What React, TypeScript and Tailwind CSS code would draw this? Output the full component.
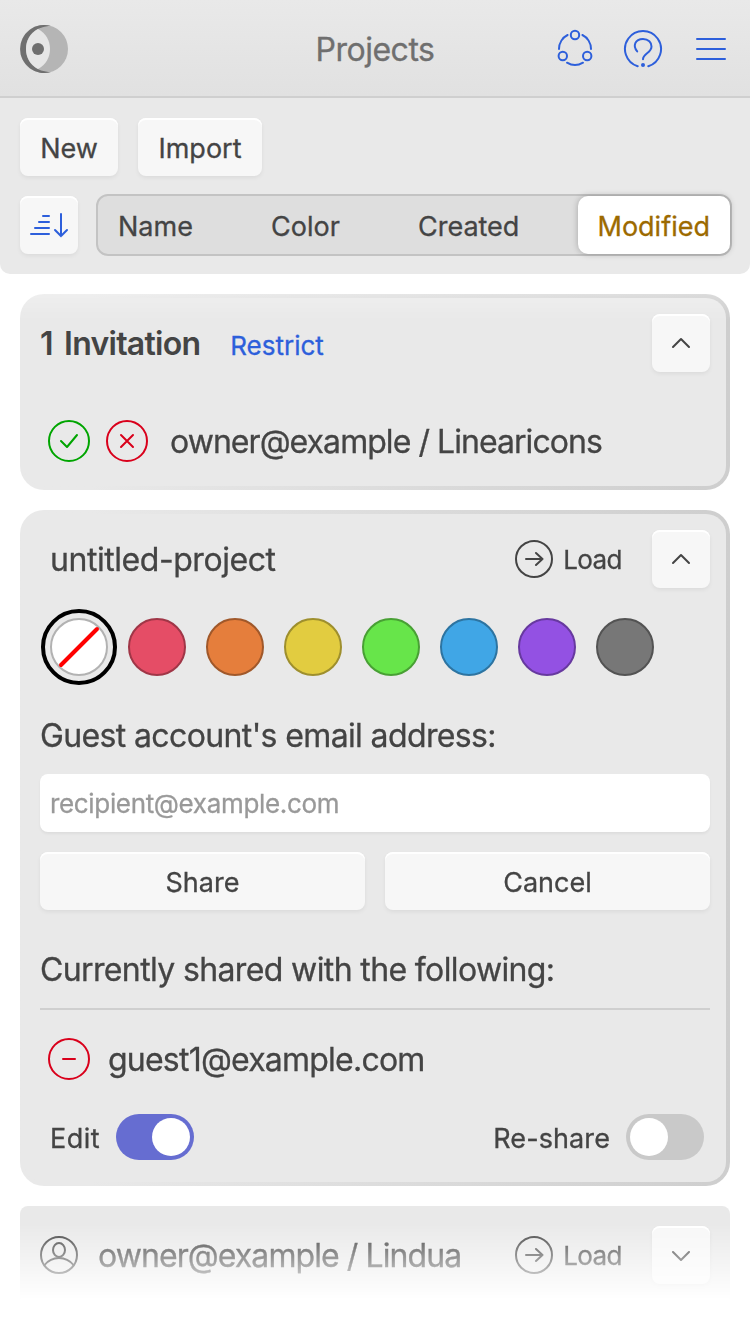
import React, { useState } from 'react';
import clsx from 'clsx';

const SORT_KEYS = ['Name', 'Color', 'Created', 'Modified'];

const SWATCHES = [
  { name: 'none', className: 'bg-white border-[#b2b2b2]' },
  { name: 'red', className: 'bg-[#e54d66] border-[#a03647]' },
  { name: 'orange', className: 'bg-[#e57e3c] border-[#a0582a]' },
  { name: 'yellow', className: 'bg-[#e2cc40] border-[#9e8f2d]' },
  { name: 'green', className: 'bg-[#67e54a] border-[#48a034]' },
  { name: 'blue', className: 'bg-[#40a6e6] border-[#2d74a1]' },
  { name: 'purple', className: 'bg-[#9351e3] border-[#67399f]' },
  { name: 'gray', className: 'bg-[#777777] border-[#535353]' },
];

const Logo: React.FC = () => (
  <svg width="48" height="48" viewBox="0 0 48 48">
    <circle cx="24" cy="24" r="24" fill="#b5b5b5" />
    <path d="M31 1A24 24 0 1 0 31 47C17 47 6 38 6 24S17 1 31 1Z" fill="#6f6f6f" />
    <path d="M18 4C26 8 30 16 30 24S26 40 18 44C10 40 6 32 6 24S10 8 18 4Z" fill="#e6e6e6" />
    <circle cx="18" cy="24" r="6" fill="#6f6f6f" />
  </svg>
);

const CommunityIcon: React.FC = () => (
  <svg width="40" height="40" viewBox="0 0 40 40" fill="none" stroke="#2d5fdb" strokeWidth="2" strokeLinecap="round">
    <circle cx="20" cy="6" r="4.2" />
    <circle cx="7.8" cy="27" r="4.2" />
    <circle cx="32.2" cy="27" r="4.2" />
    <path d="M4 20C4 14 7.500 8.500 12.600 6M27.400 6C32.500 8.500 36 14 36 20M12 33.700C17 36.700 23 36.700 28 33.700" />
  </svg>
);

const HelpIcon: React.FC = () => (
  <svg width="40" height="40" viewBox="0 0 40 40" fill="none" stroke="#2d5fdb" strokeWidth="2" strokeLinecap="round">
    <path d="M14.700 37.200A18 18 0 1 1 25.300 37.200" />
    <path d="M14.200 22.400C9.500 17 12 10 20 10C25.500 10 28.500 13.500 28.500 17.500C28.500 24 20 24.500 20 30.300" />
    <circle cx="20" cy="36" r="2" fill="#2d5fdb" stroke="none" />
  </svg>
);

const MenuIcon: React.FC = () => (
  <svg width="30" height="24" viewBox="0 0 30 24" fill="none" stroke="#2d5fdb" strokeWidth="2" strokeLinecap="round">
    <path d="M1 2H29M1 12H29M1 22H29" />
  </svg>
);

const SortIcon: React.FC = () => (
  <svg width="40" height="26" viewBox="0 0 40 26" fill="none" stroke="#2d5fdb" strokeWidth="2" strokeLinecap="round">
    <path d="M14 4H20M10 10H20M6 16H20M2 22H20" />
    <path d="M32 2V24M26 18L32 24L38 18" />
  </svg>
);

const UserIcon: React.FC = () => (
  <svg width="38" height="38" viewBox="0 0 38 38" fill="none" stroke="#444" strokeWidth="2">
    <circle cx="19" cy="19" r="18" />
    <ellipse cx="19" cy="14" rx="6" ry="7" />
    <path d="M4.500 29C12 19.500 26 19.500 33.500 29" />
  </svg>
);

const Chevron: React.FC<{ open?: boolean }> = ({ open }) => (
  <svg width="20" height="12" viewBox="0 0 20 12" fill="none" stroke="#444" strokeWidth="2" strokeLinecap="round" strokeLinejoin="round">
    <path d={open ? 'M2 10L10 2L18 10' : 'M2 3L10 11L18 3'} />
  </svg>
);

const RoundAction: React.FC<{ color: string; path: string }> = ({ color, path }) => (
  <button className="h-[42px] w-[42px]">
    <svg width="42" height="42" viewBox="0 0 42 42" fill="none" stroke={color} strokeWidth="2" strokeLinecap="round" strokeLinejoin="round">
      <circle cx="21" cy="21" r="20" />
      <path d={path} />
    </svg>
  </button>
);

interface ButtonProps {
  className?: string;
  onClick?: () => void;
  children: React.ReactNode;
}

const Button: React.FC<ButtonProps> = ({ className, onClick, children }) => (
  <button
    onClick={onClick}
    className={clsx(
      'flex h-[58px] items-center justify-center rounded-lg bg-[#f7f7f7] text-[27px] shadow-[0_2px_4px_rgba(0,0,0,0.06),inset_0_2px_0_#fff]',
      className,
    )}
  >
    {children}
  </button>
);

const LoadButton: React.FC = () => (
  <button className="mr-[30px] flex items-center gap-[10px] text-[26px]">
    <svg width="38" height="38" viewBox="0 0 38 38" fill="none" stroke="#444" strokeWidth="2" strokeLinecap="round" strokeLinejoin="round">
      <circle cx="19" cy="19" r="18" />
      <path d="M11 19H27.500M21 13L27.500 19L21 25" />
    </svg>
    <span className="tracking-[-0.55px]">Load</span>
  </button>
);

const Card: React.FC<{ className?: string; children: React.ReactNode }> = ({ className, children }) => (
  <section className={clsx('rounded-3xl bg-linear-to-r from-[#e9e9e9] from-10% to-[#cecece] p-1', className)}>
    <div className="h-full rounded-[20px] bg-[#e9e9e9] px-4 pt-4">{children}</div>
  </section>
);

const Toggle: React.FC<{ on: boolean; onClick: () => void }> = ({ on, onClick }) => (
  <button
    onClick={onClick}
    className={clsx('flex h-[46px] w-[78px] items-center rounded-full p-1', on ? 'justify-end bg-[#666dd1]' : 'justify-start bg-[#c9c9c9]')}
  >
    <span className="h-[38px] w-[38px] rounded-full bg-white" />
  </button>
);

const App: React.FC = () => {
  const [sortBy, setSortBy] = useState('Modified');
  const [color, setColor] = useState('none');
  const [canEdit, setCanEdit] = useState(true);
  const [canReshare, setCanReshare] = useState(false);

  return (
    <div className="flex h-[1334px] w-[750px] flex-col overflow-hidden bg-white font-['Inter','Liberation_Sans',sans-serif] text-[#444] [-webkit-text-stroke:0.3px]">
      <header className="grid h-[98px] shrink-0 grid-cols-[1fr_auto_1fr] items-center border-b-2 border-[#cfcfcf] bg-linear-to-b from-[#e9e9e9] to-[#e1e1e1] px-5 pt-[2px]">
        <Logo />
        <h1 className="pt-[2px] text-[32px] tracking-[-0.5px] text-[#6f6f6f]">Projects</h1>
        <div className="mr-1 flex items-center justify-end">
          <CommunityIcon />
          <span className="ml-7"><HelpIcon /></span>
          <span className="ml-[33px]"><MenuIcon /></span>
        </div>
      </header>

      <div className="h-[176px] shrink-0 rounded-b-[10px] bg-[#e9e9e9] pt-5 pr-[18px] pl-5">
        <div className="flex gap-5">
          <Button className="w-[98px] pt-1">New</Button>
          <Button className="w-[124px] pt-1">Import</Button>
        </div>
        <div className="mt-[18px] flex items-center gap-[18px]">
          <Button className="w-[58px]"><SortIcon /></Button>
          <div className="flex h-[62px] flex-1 justify-between rounded-xl border-2 border-[#c3c3c3] bg-[#dedede]">
            {SORT_KEYS.map(key => (
              <button
                key={key}
                onClick={() => setSortBy(key)}
                className={clsx(
                  'h-[58px] px-5 pt-1 text-[27px]',
                  sortBy === key && 'rounded-[10px] bg-white text-[#9c6a00] shadow-[0_0_6px_rgba(0,0,0,0.25)]',
                )}
              >
                {key}
              </button>
            ))}
          </div>
        </div>
      </div>

      <main className="flex flex-1 flex-col gap-5 overflow-hidden px-5 pt-5 [mask-image:linear-gradient(to_bottom,transparent_0,rgba(0,0,0,0.78)_22px,#000_46px,#000_950px,transparent_1026px)]">
        <Card className="h-[196px] shrink-0">
          <div className="flex items-center">
            <h2 className="pt-[2px] text-[32px] font-semibold tracking-[-0.75px] [-webkit-text-stroke:0] [word-spacing:4px]">1 Invitation</h2>
            <button className="ml-[30px] pt-[5px] text-[26px] text-[#2d5fdb]">Restrict</button>
            <Button className="ml-auto w-[58px]"><Chevron open /></Button>
          </div>
          <div className="mt-12 flex items-center pl-2">
            <RoundAction color="#00a500" path="M13 21L19 27L29 15" />
            <span className="ml-4 flex"><RoundAction color="#d9001b" path="M15 15L27 27M27 15L15 27" /></span>
            <span className="ml-[22px] pt-[2px] text-[32px] leading-[40px] tracking-[-0.95px]">owner@example / Linearicons</span>
          </div>
        </Card>

        <Card className="h-[676px] shrink-0">
          <div className="flex items-center">
            <h2 className="ml-[10px] pt-[2px] text-[32px] tracking-[-0.45px]">untitled-project</h2>
            <div className="ml-auto flex items-center">
              <LoadButton />
              <Button className="w-[58px]"><Chevron open /></Button>
            </div>
          </div>
          <div className="mt-[30px] flex gap-5 pl-[10px]">
            {SWATCHES.map(swatch => (
              <button
                key={swatch.name}
                onClick={() => setColor(swatch.name)}
                className={clsx(
                  'flex h-[58px] w-[58px] items-center justify-center rounded-full border-2',
                  swatch.className,
                  color === swatch.name && 'outline-4 outline-offset-5 outline-black',
                )}
              >
                {swatch.name === 'none' && (
                  <svg width="42" height="42" viewBox="0 0 42 42" stroke="#f00" strokeWidth="4" strokeLinecap="round">
                    <path d="M3 39L39 3" />
                  </svg>
                )}
              </button>
            ))}
          </div>
          <label className="mt-[39px] block text-[32px] leading-[42px] tracking-[-0.63px]">Guest account's email address:</label>
          <input
            type="email"
            placeholder="recipient@example.com"
            className="mt-[17px] block h-[58px] w-full rounded-lg bg-white px-[10px] text-[26px] tracking-[-0.34px] shadow-[0_2px_3px_rgba(0,0,0,0.05)] placeholder:text-[#999]"
          />
          <div className="mt-5 grid grid-cols-2 gap-5">
            <Button className="pt-1">Share</Button>
            <Button className="pt-1">Cancel</Button>
          </div>
          <h3 className="mt-10 border-b-2 border-[#cfcfcf] pb-[18px] text-[32px] leading-[40px] tracking-[-0.63px]">
            Currently shared with the following:
          </h3>
          <div className="mt-7 flex items-center pl-2">
            <RoundAction color="#d9001b" path="M15 21H27" />
            <span className="ml-[18px] pt-[2px] text-[32px] leading-[40px] tracking-[-0.78px]">guest1@example.com</span>
          </div>
          <div className="mt-[34px] flex items-center justify-between pr-[6px] pl-[10px] text-[27px]">
            <div className="flex items-center gap-4">
              <span className="pt-1 tracking-[0.5px]">Edit</span>
              <Toggle on={canEdit} onClick={() => setCanEdit(!canEdit)} />
            </div>
            <div className="flex items-center gap-4">
              <span className="pt-1 tracking-[0.1px]">Re-share</span>
              <Toggle on={canReshare} onClick={() => setCanReshare(!canReshare)} />
            </div>
          </div>
        </Card>

        <section className="flex h-[98px] shrink-0 items-center rounded-lg bg-[#e9e9e9] px-5">
          <UserIcon />
          <span className="ml-5 pt-[2px] text-[32px] tracking-[-0.92px]">owner@example / Lindua</span>
          <div className="ml-auto flex items-center">
            <LoadButton />
            <Button className="w-[58px]"><Chevron /></Button>
          </div>
        </section>
      </main>
    </div>
  );
};

export default App;
